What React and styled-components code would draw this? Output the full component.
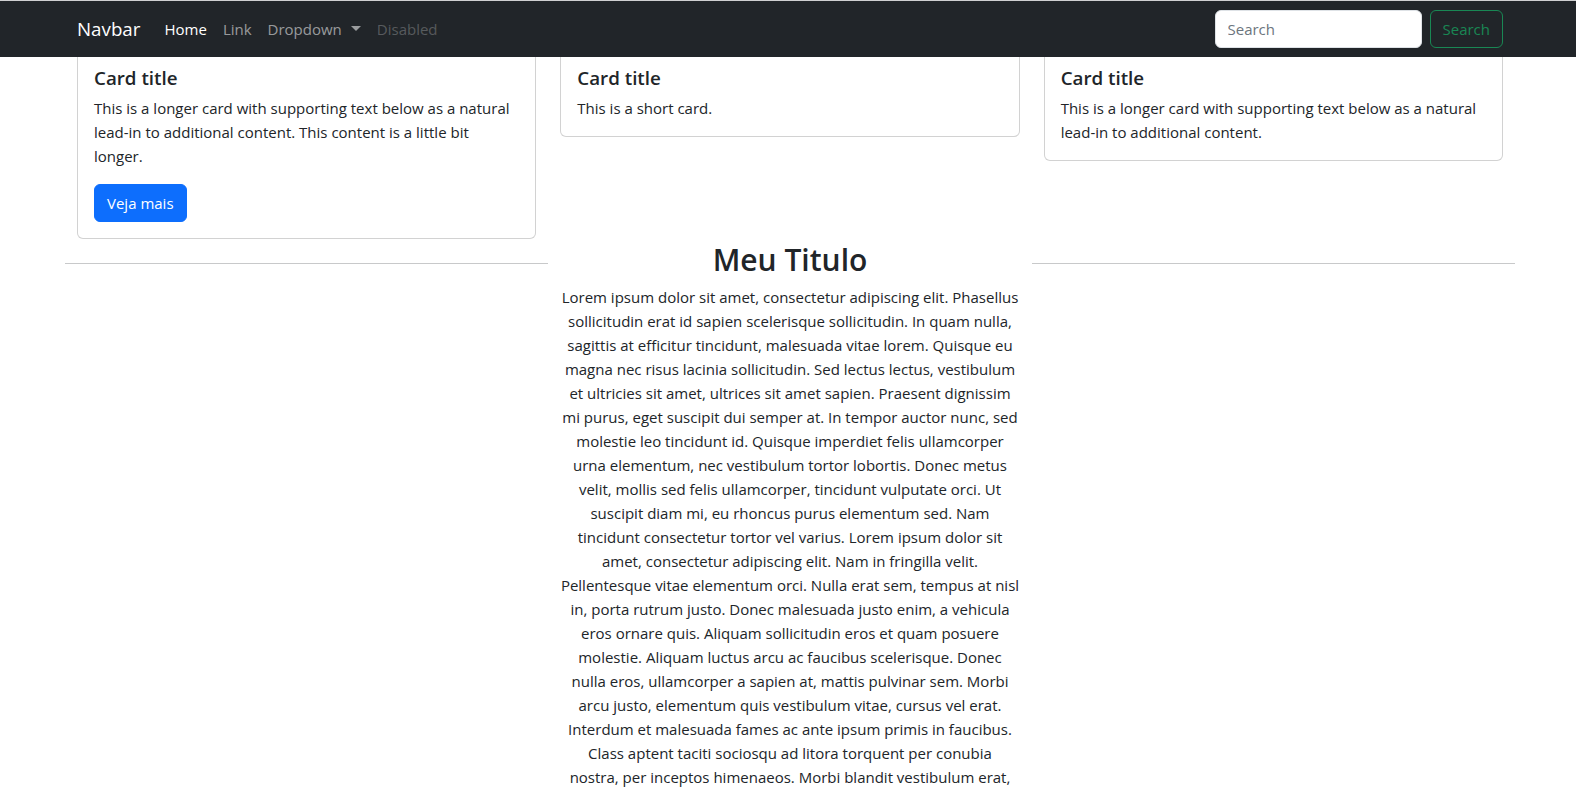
import React from "react";
import styled, { createGlobalStyle } from "styled-components";

const GlobalStyle = createGlobalStyle`
  *, *::before, *::after { box-sizing: border-box; }
  body {
    margin: 0;
    background: #fff;
    color: #212529;
    font-family: "Open Sans", "Noto Sans", sans-serif;
    font-size: 15px;
    line-height: 24px;
  }
`;

const Navbar = styled.nav`
  position: fixed;
  top: 0;
  left: 0;
  right: 0;
  z-index: 10;
  background: #212529;
  border-top: 1px solid #cfd0d1;
  padding: 8px 0;
`;

const NavContainer = styled.div`
  width: 1450px;
  margin-left: 65px;
  padding: 0 12px;
  display: flex;
  align-items: center;
  height: 40px;
`;

const Brand = styled.a`
  font-size: 18.75px;
  line-height: 30px;
  padding: 5px 0;
  margin-right: 16px;
  color: #fff;
  text-decoration: none;
`;

const NavList = styled.ul`
  display: flex;
  list-style: none;
  margin: 0;
  padding: 0;
`;

const linkColors = {
  active: "#ffffff",
  normal: "rgba(255, 255, 255, 0.55)",
  disabled: "rgba(255, 255, 255, 0.25)",
};

const NavLink = styled.a`
  display: block;
  padding: 8px;
  font-size: 15px;
  line-height: 24px;
  color: ${(p) => linkColors[p.$state || "normal"]};
  text-decoration: none;
`;

const Caret = styled.span`
  display: inline-block;
  margin-left: 9px;
  vertical-align: 0.255em;
  border-top: 5px solid;
  border-right: 5px solid transparent;
  border-left: 5px solid transparent;
  border-bottom: 0;
`;

const SearchForm = styled.form`
  margin-left: auto;
  display: flex;
  gap: 8px;
`;

const SearchInput = styled.input`
  width: 207px;
  height: 38px;
  padding: 6px 12px;
  font-family: "Open Sans", "Noto Sans", sans-serif;
  font-size: 15px;
  color: #212529;
  background: #fff;
  border: 1px solid #dee2e6;
  border-radius: 6px;
  outline: none;
  &::placeholder { color: #6c757d; }
`;

const OutlineButton = styled.button`
  height: 38px;
  padding: 6px 12px;
  font-family: "Open Sans", "Noto Sans", sans-serif;
  font-size: 15px;
  color: #198754;
  background: transparent;
  border: 1px solid #198754;
  border-radius: 6px;
`;

const Main = styled.main`
  width: 1450px;
  margin-left: 65px;
  padding-top: 47px;
`;

const CardRow = styled.div`
  display: grid;
  grid-template-columns: repeat(3, 1fr);
  column-gap: 24px;
  padding: 0 12px;
  align-items: start;
`;

const Card = styled.div`
  background: #fff;
  border: 1px solid rgba(0, 0, 0, 0.175);
  border-radius: 6px;
`;

const CardBody = styled.div`
  padding: 16px;
`;

const CardTitle = styled.h5`
  margin: 0 0 6px;
  padding-top: 2px;
  font-size: 18.75px;
  font-weight: 600;
  line-height: 24px;
`;

const CardText = styled.p`
  margin: 0 0 16px;
  &:last-child { margin-bottom: 0; }
`;

const PrimaryButton = styled.button`
  height: 38px;
  margin-top: 1px;
  padding: 6px 12px;
  font-family: "Open Sans", "Noto Sans", sans-serif;
  font-size: 15px;
  color: #fff;
  background: #0d6efd;
  border: 1px solid #0d6efd;
  border-radius: 6px;
  display: block;
`;

const Section = styled.section`
  display: grid;
  grid-template-columns: repeat(3, 1fr);
`;

const Rule = styled.hr`
  margin: 24px 0 0;
  height: 0;
  border: 0;
  border-top: 1px solid #c8c9ca;
`;

const Content = styled.div`
  text-align: center;
`;

const Heading = styled.h2`
  margin: 0 0 6px;
  padding-top: 2px;
  font-size: 30px;
  font-weight: 600;
  line-height: 38.4px;
`;

const Paragraph = styled.p`
  margin: 0 0 16px;
  white-space: nowrap;
`;

const loremLines = [
  "Lorem ipsum dolor sit amet, consectetur adipiscing elit. Phasellus",
  "sollicitudin erat id sapien scelerisque sollicitudin. In quam nulla,",
  "sagittis at efficitur tincidunt, malesuada vitae lorem. Quisque eu",
  "magna nec risus lacinia sollicitudin. Sed lectus lectus, vestibulum",
  "et ultricies sit amet, ultrices sit amet sapien. Praesent dignissim",
  "mi purus, eget suscipit dui semper at. In tempor auctor nunc, sed",
  "molestie leo tincidunt id. Quisque imperdiet felis ullamcorper",
  "urna elementum, nec vestibulum tortor lobortis. Donec metus",
  "velit, mollis sed felis ullamcorper, tincidunt vulputate orci. Ut",
  "suscipit diam mi, eu rhoncus purus elementum sed. Nam",
  "tincidunt consectetur tortor vel varius. Lorem ipsum dolor sit",
  "amet, consectetur adipiscing elit. Nam in fringilla velit.",
  "Pellentesque vitae elementum orci. Nulla erat sem, tempus at nisl",
  "in, porta rutrum justo. Donec malesuada justo enim, a vehicula",
  "eros ornare quis. Aliquam sollicitudin eros et quam posuere",
  "molestie. Aliquam luctus arcu ac faucibus scelerisque. Donec",
  "nulla eros, ullamcorper a sapien at, mattis pulvinar sem. Morbi",
  "arcu justo, elementum quis vestibulum vitae, cursus vel erat.",
  "Interdum et malesuada fames ac ante ipsum primis in faucibus.",
  "Class aptent taciti sociosqu ad litora torquent per conubia",
  "nostra, per inceptos himenaeos. Morbi blandit vestibulum erat,",
];

const Lines = ({ lines }) =>
  lines.map((line, i) => (
    <React.Fragment key={i}>
      {line}
      {i < lines.length - 1 && <br />}
    </React.Fragment>
  ));

const cards = [
  {
    text: [
      "This is a longer card with supporting text below as a natural",
      "lead-in to additional content. This content is a little bit",
      "longer.",
    ],
    button: true,
  },
  { text: ["This is a short card."] },
  {
    text: [
      "This is a longer card with supporting text below as a natural",
      "lead-in to additional content.",
    ],
  },
];

export default function App() {
  return (
    <>
      <GlobalStyle />
      <Navbar>
        <NavContainer>
          <Brand href="#">Navbar</Brand>
          <NavList>
            <li><NavLink $state="active" href="#">Home</NavLink></li>
            <li><NavLink href="#">Link</NavLink></li>
            <li><NavLink href="#">Dropdown<Caret /></NavLink></li>
            <li><NavLink $state="disabled">Disabled</NavLink></li>
          </NavList>
          <SearchForm onSubmit={(e) => e.preventDefault()}>
            <SearchInput type="search" placeholder="Search" />
            <OutlineButton type="submit">Search</OutlineButton>
          </SearchForm>
        </NavContainer>
      </Navbar>
      <Main>
        <CardRow>
          {cards.map((c, i) => (
            <Card key={i}>
              <CardBody>
                <CardTitle>Card title</CardTitle>
                <CardText><Lines lines={c.text} /></CardText>
                {c.button && <PrimaryButton>Veja mais</PrimaryButton>}
              </CardBody>
            </Card>
          ))}
        </CardRow>
        <Section>
          <div><Rule /></div>
          <Content>
            <Heading>Meu Titulo</Heading>
            <Paragraph><Lines lines={loremLines} /></Paragraph>
          </Content>
          <div><Rule /></div>
        </Section>
      </Main>
    </>
  );
}
